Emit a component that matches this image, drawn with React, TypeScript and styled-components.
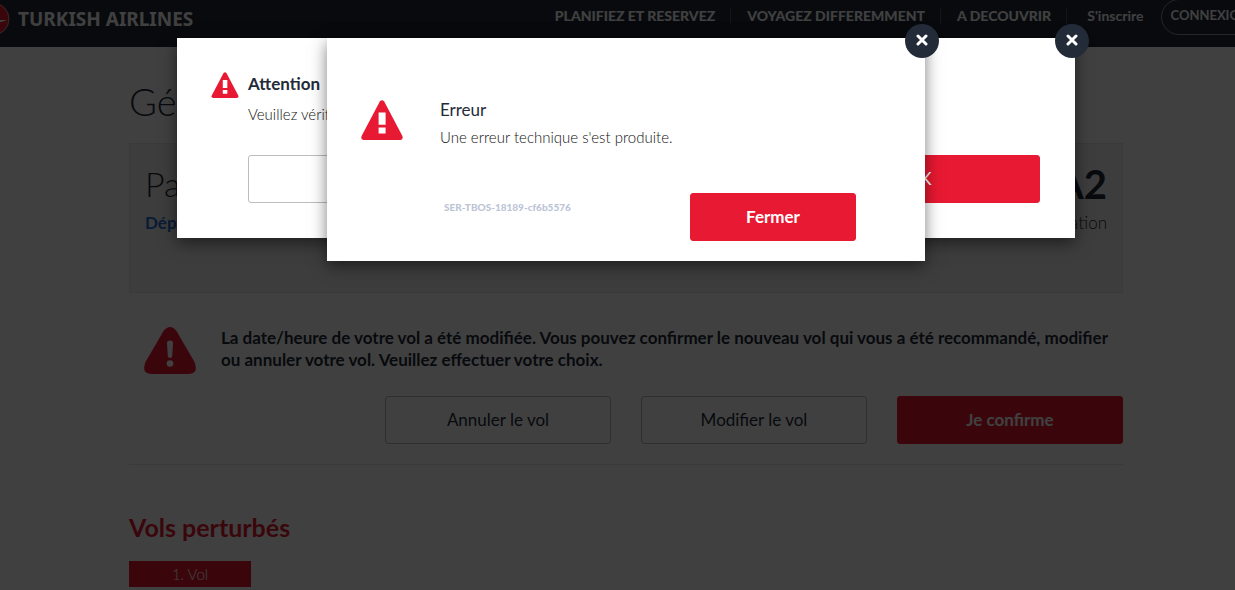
import React from 'react';
import styled, { createGlobalStyle, css } from 'styled-components';

const GlobalStyle = createGlobalStyle`
  *, *::before, *::after { box-sizing: border-box; }
  html, body { margin: 0; height: 100%; overflow: hidden; background: #fff; }
  body {
    font-family: Lato, "Open Sans", sans-serif;
    font-size: 17px;
    color: #232b38;
  }
  h1, h2, p { margin: 0; font-weight: 400; }
  button { font-family: inherit; cursor: pointer; }
`;

const Viewport = styled.div`
  position: relative;
  min-height: 100vh;
  width: calc(100% + 17px);
`;

const Header = styled.header`
  display: flex;
  justify-content: space-between;
  align-items: flex-start;
  height: 47px;
  padding-right: 17px;
  background: #232b38;
`;

const Brand = styled.a`
  display: flex;
  align-items: center;
  gap: 8px;
  height: 38px;
  margin-left: -24px;
  color: #fff;
  font-family: "Noto Sans", sans-serif;
  font-size: 19px;
  font-weight: 700;
  text-decoration: none;
`;

const Nav = styled.nav`
  display: flex;
  align-items: center;
  height: 32px;
  margin-right: -32px;
`;

const NavLink = styled.a<{ $plain?: boolean }>`
  padding: 0 15px 0 16px;
  border-right: ${p => (p.$plain ? '0' : '1px solid #4a5564')};
  color: #fff;
  font-size: 14px;
  line-height: 16px;
  font-weight: ${p => (p.$plain ? 700 : 900)};
  text-decoration: none;
  white-space: nowrap;
  ${p => p.$plain && css`padding: 0 18px 0 20px;`}
`;

const LoginButton = styled.button`
  height: 36px;
  margin-bottom: -2px;
  padding: 0 16px 4px 8px;
  border: 1px solid #8c95a1;
  border-radius: 18px;
  background: transparent;
  color: #fff;
  font-size: 13px;
  line-height: 16px;
  font-weight: 700;
  white-space: nowrap;
`;

const Container = styled.main`
  max-width: 994px;
  margin: 0 auto;
`;

const PageTitle = styled.h1`
  padding: 30px 0 2px;
  font-size: 38px;
  line-height: 48px;
  font-weight: 300;
`;

const Summary = styled.section`
  display: flex;
  justify-content: space-between;
  height: 150px;
  margin-top: 16px;
  padding: 14px 15px;
  border: 1px solid #e8e8e8;
  background: #f3f3f3;
`;

const SummaryCol = styled.div<{ $right?: boolean }>`
  display: flex;
  flex-direction: column;
  align-items: ${p => (p.$right ? 'flex-end' : 'flex-start')};
`;

const Passenger = styled.p`
  font-size: 34px;
  line-height: 52px;
  font-weight: 300;
`;

const Leg = styled.p<{ $light?: boolean }>`
  font-size: 17px;
  line-height: 26px;
  font-weight: ${p => (p.$light ? 300 : 700)};
  color: ${p => (p.$light ? '#232b38' : '#2a6ed8')};
`;

const Code = styled.p`
  font-size: 40px;
  line-height: 52px;
  font-weight: 700;
`;

const Notice = styled.section`
  display: flex;
  gap: 25px;
  padding: 34px 15px 0;
`;

const NoticeText = styled.p`
  flex: 1;
  font-size: 17px;
  line-height: 22px;
  font-weight: 700;
`;

const Actions = styled.div`
  display: flex;
  justify-content: flex-end;
  gap: 30px;
  padding: 21px 0 20px;
  border-bottom: 1px solid #e6e6e6;
`;

const Button = styled.button<{ $primary?: boolean; $width: number; $weight?: number }>`
  width: ${p => p.$width}px;
  height: 48px;
  padding: 0 0 2px;
  border: 1px solid ${p => (p.$primary ? '#e81932' : '#bbbdc0')};
  border-radius: 3px;
  background: ${p => (p.$primary ? '#e81932' : '#fff')};
  color: ${p => (p.$primary ? '#fff' : '#232b38')};
  font-size: 17px;
  font-weight: ${p => p.$weight ?? 400};
`;

const SectionTitle = styled.h2`
  padding: 43px 0 1px;
  font-size: 25px;
  line-height: 38px;
  font-weight: 700;
  color: #e81932;
`;

const FlightTag = styled.span`
  display: block;
  width: 122px;
  margin-top: 14px;
  background: #e81932;
  color: #fff;
  font-size: 15px;
  line-height: 26px;
  font-weight: 300;
  text-align: center;
`;

const Overlay = styled.div`
  position: absolute;
  inset: 0;
  background: rgba(0, 0, 0, 0.75);
`;

const Dialog = styled.section<{ $width: number }>`
  position: absolute;
  top: 38px;
  left: 50%;
  width: ${p => p.$width}px;
  margin-left: ${p => -p.$width / 2}px;
  background: #fff;
  box-shadow: 0 5px 15px rgba(0, 0, 0, 0.5);
`;

const CloseButton = styled.button`
  position: absolute;
  top: -14px;
  right: -14px;
  display: grid;
  place-items: center;
  width: 34px;
  height: 34px;
  padding: 0 0 2px;
  border: 0;
  border-radius: 50%;
  background: #232b38;
`;

const WarningBody = styled.div`
  display: grid;
  grid-template-columns: 28px 1fr;
  column-gap: 9px;
  padding: 33px 35px 35px 34px;
`;

const ErrorBody = styled.div`
  display: grid;
  grid-template-columns: 44px 1fr;
  column-gap: 35px;
  padding: 57px 69px 20px 34px;
`;

const DialogTitle = styled.h2`
  font-size: 17px;
  line-height: 30px;
`;

const WarningTitle = styled(DialogTitle)`
  margin-bottom: 4px;
  line-height: 26px;
  font-weight: 700;
`;

const DialogText = styled.p`
  font-size: 15px;
  line-height: 26px;
  font-weight: 300;
  color: #111;
`;

const ErrorText = styled(DialogText)`
  line-height: 24px;
`;

const WarningActions = styled.div`
  grid-column: 2;
  display: flex;
  justify-content: space-between;
  margin-top: 28px;
`;

const ErrorFooter = styled.div`
  grid-column: 2;
  display: flex;
  align-items: flex-start;
  justify-content: space-between;
  margin-top: 44px;
  padding-left: 4px;
`;

const ErrorCode = styled.small`
  font-size: 10px;
  line-height: 28px;
  font-weight: 900;
  color: #bcc5d6;
`;

const IconCell = styled.div<{ $top: number }>`
  padding-top: ${p => p.$top}px;
  line-height: 0;
`;

const BrandMark = () => (
  <svg width="34" height="34" viewBox="0 0 34 34" aria-hidden="true">
    <circle cx="17" cy="17" r="16" fill="#e81932" stroke="#e4a0a6" strokeWidth="1" />
    <path d="M10 18 C18 18 24 18 31 18 C26 20 20 21 14 23 Z" fill="#fff" />
  </svg>
);

const AlertTriangle = ({ width, height }: { width: number; height: number }) => (
  <svg width={width} height={height} viewBox="0 0 42 40" aria-hidden="true">
    <path d="M18.8 1.4 Q21 -1 23.2 1.4 L41.4 36 Q42.6 39.8 39 40 H3 Q-0.6 39.8 0.6 36 Z" fill="#e81932" />
    <path d="M17.6 12.4h7v12.4h-7zM17.6 27.6h7v6h-7z" fill="#fff" />
  </svg>
);

const RoundedAlert = () => (
  <svg width="52" height="48" viewBox="0 0 52 48" aria-hidden="true">
    <path d="M19.5 4 Q26 -4 32.5 4 L50.5 35 Q55 47 44.5 47 H7.5 Q-3 47 1.5 35 Z" fill="#e81932" />
    <path d="M23 16 Q23 13.5 26 13.5 Q29 13.5 29 16 L28.2 29 Q28 31 26 31 Q24 31 23.8 29 Z" fill="#fff" />
    <circle cx="26" cy="36.5" r="3.3" fill="#fff" />
  </svg>
);

const Cross = () => (
  <svg width="12" height="12" viewBox="0 0 12 12" aria-hidden="true">
    <path d="M2 2 L10 10 M10 2 L2 10" stroke="#fff" strokeWidth="3" strokeLinecap="round" />
  </svg>
);

export default function App() {
  return (
    <>
      <GlobalStyle />
      <Viewport>
        <Header>
          <Brand href="#"><BrandMark />TURKISH AIRLINES</Brand>
          <Nav>
            <NavLink href="#">PLANIFIEZ ET RESERVEZ</NavLink>
            <NavLink href="#">VOYAGEZ DIFFEREMMENT</NavLink>
            <NavLink href="#">A DECOUVRIR</NavLink>
            <NavLink href="#" $plain>S'inscrire</NavLink>
            <LoginButton>CONNEXION</LoginButton>
          </Nav>
        </Header>
        <Container>
          <PageTitle>Gérer</PageTitle>
          <Summary>
            <SummaryCol>
              <Passenger>Passager</Passenger>
              <Leg>Départ</Leg>
            </SummaryCol>
            <SummaryCol $right>
              <Code>A2</Code>
              <Leg $light>Code de réservation</Leg>
            </SummaryCol>
          </Summary>
          <Notice>
            <RoundedAlert />
            <NoticeText>
              La date/heure de votre vol a été modifiée. Vous pouvez confirmer le nouveau vol qui vous a été recommandé, modifier ou annuler votre vol. Veuillez effectuer votre choix.
            </NoticeText>
          </Notice>
          <Actions>
            <Button $width={226}>Annuler le vol</Button>
            <Button $width={226}>Modifier le vol</Button>
            <Button $width={226} $primary $weight={700}>Je confirme</Button>
          </Actions>
          <SectionTitle>Vols perturbés</SectionTitle>
          <FlightTag>1. Vol</FlightTag>
        </Container>
        <Overlay />
        <Dialog $width={898} role="dialog" aria-label="Attention">
          <WarningBody>
            <IconCell $top={1}><AlertTriangle width={28} height={26} /></IconCell>
            <div>
              <WarningTitle>Attention</WarningTitle>
              <DialogText>Veuillez vérifier</DialogText>
            </div>
            <WarningActions>
              <Button $width={242}>Annuler</Button>
              <Button $width={242} $primary>OK</Button>
            </WarningActions>
          </WarningBody>
          <CloseButton aria-label="Fermer"><Cross /></CloseButton>
        </Dialog>
        <Dialog $width={598} role="dialog" aria-label="Erreur">
          <ErrorBody>
            <IconCell $top={5}><AlertTriangle width={42} height={40} /></IconCell>
            <div>
              <DialogTitle>Erreur</DialogTitle>
              <ErrorText>Une erreur technique s'est produite.</ErrorText>
            </div>
            <ErrorFooter>
              <ErrorCode>SER-TBOS-18189-cf6b5576</ErrorCode>
              <Button $width={166} $primary $weight={700}>Fermer</Button>
            </ErrorFooter>
          </ErrorBody>
          <CloseButton aria-label="Fermer"><Cross /></CloseButton>
        </Dialog>
      </Viewport>
    </>
  );
}
